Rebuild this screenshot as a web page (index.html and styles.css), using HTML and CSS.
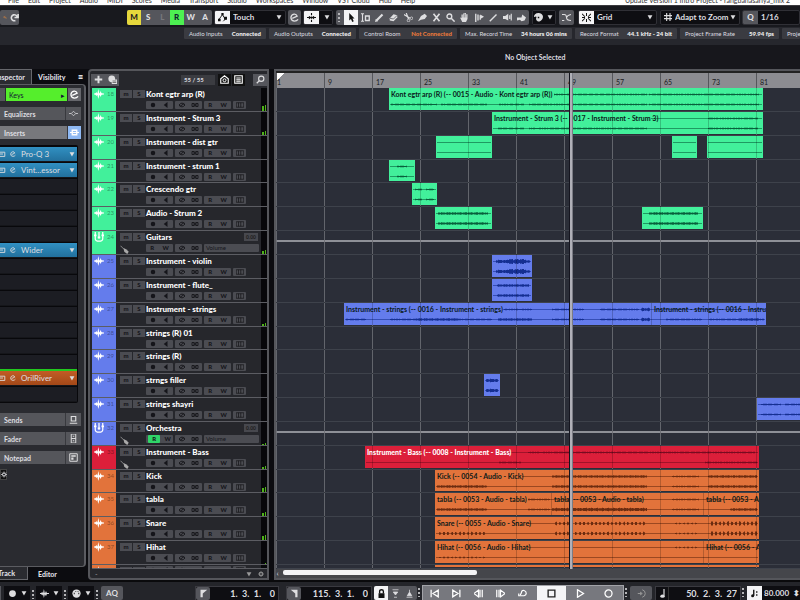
FILE: index.html
```
<!doctype html>
<html lang="en">
<head>
<meta charset="utf-8">
<title>Project</title>
<link rel="stylesheet" href="styles.css">
</head>
<body>
	<svg class="defs" aria-hidden="true">
		<symbol id="i-down" viewBox="0 0 10 10"><path d="M1 2h8L5 9z" fill="currentColor"/></symbol>
		<symbol id="i-e" viewBox="0 0 10 10"><path d="M2.500 6 8 3.500Q7 .8 4.500 1.200 1 2 1 5.500 1.500 9 5 9 7.500 8.800 9 7" fill="none" stroke="currentColor" stroke-width="1.400"/></symbol>
		<symbol id="i-wave" viewBox="0 0 12 12"><path d="M0 6h12" stroke="currentColor" stroke-width="1.300"/><path d="M1 6 3 3.500 4 6 5.200 0 6.500 6 8 2.500 9 5 11 6 9 7 8 9.500 6.500 7 5.200 12 4 7 3 8.500z" fill="currentColor"/></symbol>
		<symbol id="i-fork" viewBox="0 0 12 12"><path d="M1.500 0v8q0 3 4.500 3t4.500-3V0M6 0v8" fill="none" stroke="currentColor" stroke-width="1.500"/><path d="M0 3h3v2H0zM4.500 5.500h3v2h-3zM9 3h3v2H9z" fill="currentColor"/></symbol>
		<symbol id="i-jack" viewBox="0 0 12 12"><path d="M0 1l5 5" stroke="currentColor"/><path d="M4 4l4 2 3 3-2 3-4-3z" fill="currentColor"/></symbol>
		<symbol id="i-gear" viewBox="0 0 12 12"><path d="M6 0v12M0 6h12M2 2l8 8M10 2l-8 8" stroke="currentColor" stroke-width="1.500"/><circle cx="6" cy="6" r="3" fill="#2a2b30" stroke="currentColor" stroke-width="1.800"/></symbol>
	</svg>

	<nav class="menu">
		<a href="#">File</a><a href="#">Edit</a><a href="#">Project</a><a href="#">Audio</a><a href="#">MIDI</a><a href="#">Scores</a><a href="#">Media</a><a href="#">Transport</a><a href="#">Studio</a><a href="#">Workspaces</a><a href="#">Window</a><a href="#">VST Cloud</a><a href="#">Hub</a><a href="#">Help</a>
		<span class="title">Update Version 1 Intro Project - rangbanasariya_mix 2</span>
	</nav>

	<header class="toolbar">
		<div class="group history">
			<button aria-label="Undo"><svg viewBox="0 0 10 10"><path d="M8 8Q9 3 3 4M4.500 1 1.500 4l3 3" fill="none" stroke="#d9843c" stroke-width="1.500"/></svg></button>
			<button aria-label="Redo"><svg viewBox="0 0 10 10"><path d="M8 4.500A3.300 3.300 0 1 0 6 8.300M9 1v4H5" fill="none" stroke="currentColor" stroke-width="1.800"/></svg></button>
		</div>
		<div class="group states">
			<button class="mute">M</button><button>S</button><button class="dim">L</button><button class="read">R</button><button>W</button><button>A</button>
		</div>
		<div class="combo automation">
			<button class="white" aria-label="Automation panel"><svg viewBox="0 0 12 12"><path d="M1 9 6 2l2 4 3 1-4 4" fill="none" stroke="currentColor" stroke-width="1.200"/><path d="M0 7.500h3.500V11H0zM4.500 0h3v3h-3zM8 5h4v4H8z" fill="currentColor"/></svg></button>
			<select aria-label="Automation mode"><option>Touch</option></select>
			<svg class="caret"><use href="#i-down"/></svg>
		</div>
		<button class="btn edit" aria-label="Edit"><svg><use href="#i-e"/></svg></button>
		<div class="combo scroll">
			<button class="white" aria-label="Auto-scroll"><svg viewBox="0 0 12 12"><path d="M6 0v3M6 4.500v3M6 9v3M0 6h12" stroke="currentColor" stroke-width="1.500"/><path d="M2.500 3.500 6 6 2.500 8.500zM9.500 3.500 6 6l3.500 2.500z" fill="currentColor"/></svg></button>
			<button class="black" aria-label="Auto-scroll options"><svg><use href="#i-down"/></svg></button>
		</div>
		<div class="group tools">
			<span class="dots"></span>
			<button class="white" aria-label="Select"><svg viewBox="0 0 12 12"><path d="M3 0v10l2.300-2L7 12l2-1-1.700-3.700H10z" fill="currentColor"/></svg></button>
			<button aria-label="Range"><svg viewBox="0 0 12 12"><path d="M0 1h4M2 1v10M0 11h4" stroke="currentColor" stroke-width="1.500"/><path d="M6 4h5v6H6z" fill="none" stroke="currentColor" stroke-width="1.800"/></svg></button>
			<button aria-label="Draw"><svg viewBox="0 0 12 12"><path d="M2 10 10 2" stroke="currentColor" stroke-width="2.800"/><path d="M0 12l1-4 3 3z" fill="currentColor"/></svg></button>
			<button aria-label="Erase"><svg viewBox="0 0 12 12"><path d="M1 7 6 1.500l5 1.500v3l-5 5-5-1z" fill="currentColor"/><path d="M1 7l5 1 5-5" fill="none" stroke="#55565c"/></svg></button>
			<button aria-label="Split"><svg viewBox="0 0 12 12"><path d="M0 2l8 5M3 0l3 8" stroke="currentColor" stroke-width="1.600"/><circle cx="10" cy="7" r="1.700" fill="none" stroke="currentColor"/><circle cx="6" cy="10" r="1.700" fill="none" stroke="currentColor"/></svg></button>
			<button aria-label="Glue"><svg viewBox="0 0 12 12"><path d="M0 11 4 4l5-3 3 3-3 4-5 1z" fill="currentColor"/></svg></button>
			<button aria-label="Mute"><svg viewBox="0 0 12 12"><path d="M2 1l8 10M10 1 2 11" stroke="currentColor" stroke-width="2.200"/></svg></button>
			<button aria-label="Zoom"><svg viewBox="0 0 12 12"><circle cx="4.500" cy="4.500" r="3.200" fill="none" stroke="currentColor" stroke-width="1.800"/><path d="M7 7l4.500 4.500" stroke="currentColor" stroke-width="2"/></svg></button>
			<button aria-label="Comp"><svg viewBox="0 0 12 12"><path d="M3 12 0 6l2 .5V2h2V.5h2V0h2v1.500h2V8l-2 4z" fill="currentColor"/><path d="M4 1v5M6 1v5M8 1v5" stroke="#55565c" stroke-width=".6"/></svg></button>
			<button aria-label="Time warp"><svg viewBox="0 0 12 12"><path d="M1 1v11M4 2v8M7 3v6" stroke="currentColor" stroke-width="1.800"/><path d="M7 2l5 3-5 3z" fill="currentColor"/></svg></button>
			<button aria-label="Line"><svg viewBox="0 0 12 12"><path d="M1 11 10 2" stroke="currentColor" stroke-width="1.800"/></svg></button>
			<button aria-label="Play"><svg viewBox="0 0 12 12"><path d="M0 4h3l4-3v9L3 8H0z" fill="currentColor"/><path d="M9 3v5M11 1v9" stroke="currentColor" stroke-width="1.500"/></svg></button>
			<button aria-label="Color"><svg viewBox="0 0 12 12"><path d="M0 6h6l1-4 5 4-2 4-4 1-2-2-4 1z" fill="currentColor"/></svg></button>
		</div>
		<div class="combo palette">
			<button class="black" aria-label="Palette"><svg viewBox="0 0 12 12"><path d="M6 0C2 0 0 2.500 0 5c1 1 2-1 3 0s-1 2 0 4 3 3 5 2 4-3 4-6-3-5-6-5z" fill="currentColor"/><path d="M5 5h2v2H5z" fill="#111"/></svg></button>
			<button class="black" aria-label="Palette options"><svg><use href="#i-down"/></svg></button>
		</div>
		<button class="btn cross" aria-label="Crossfade"><svg viewBox="0 0 12 12"><path d="M0 2h3q3 0 3 4t6 4M0 10h3M6 6q1-3 6-4" fill="none" stroke="currentColor" stroke-width="1.400"/></svg></button>
		<div class="combo snap">
			<button class="white" aria-label="Snap"><svg viewBox="0 0 12 12"><path d="M6 0v4M6 8v4M0 1l4 4M0 6h4M0 11l4-4M12 1 8 5M12 6H8M12 11 8 7" stroke="currentColor" stroke-width="1.400"/></svg></button>
			<select aria-label="Snap type"><option>Grid</option></select>
			<svg class="caret"><use href="#i-down"/></svg>
		</div>
		<div class="combo adapt">
			<svg class="hash" viewBox="0 0 12 12"><path d="M4 0v12M9 0v12M0 4h12M0 8.500h12" stroke="currentColor" stroke-width="1.700"/></svg>
			<select aria-label="Grid type"><option>Adapt to Zoom</option></select>
			<svg class="caret"><use href="#i-down"/></svg>
		</div>
		<div class="combo quantize">
			<button class="q" aria-label="Apply quantize">Q</button>
			<select aria-label="Quantize preset"><option>1/16</option></select>
		</div>
	</header>

	<section class="status">
		<div class="pill"><span>Audio Inputs</span><b>Connected</b></div>
		<div class="pill"><span>Audio Outputs</span><b>Connected</b></div>
		<div class="pill"><span>Control Room</span><b class="warn">Not Connected</b></div>
		<div class="pill"><span>Max. Record Time</span><b>34 hours 06 mins</b></div>
		<div class="pill"><span>Record Format</span><b>44.1 kHz - 24 bit</b></div>
		<div class="pill"><span>Project Frame Rate</span><b>59.94 fps</b></div>
		<div class="pill"><span>Project</span></div>
	</section>
	<div class="infoline">No Object Selected</div>

	<main>
		<aside class="inspector">
			<div class="tabs top">
				<button class="on">Inspector</button><button>Visibility</button><button class="burger">≡</button>
			</div>
			<div class="panel">
				<div class="keys"><span class="nub"></span><button class="name">Keys<i>▸</i></button><button class="open" aria-label="Edit channel"><svg><use href="#i-e"/></svg></button></div>
				<button class="sect">Equalizers<svg viewBox="0 0 12 12"><path d="M0 6h3M9 6h3M6 3l3 3-3 3-3-3z" fill="none" stroke="currentColor"/></svg></button>
				<button class="sect lit">Inserts<svg viewBox="0 0 12 12"><path d="M0 6h12" stroke="currentColor" stroke-width="1.500"/><path d="M3 3h6v6H3z" fill="none" stroke="currentColor" stroke-width="1.800"/></svg></button>
				<div class="slots" id="slots"></div>
				<button class="sect">Sends<svg viewBox="0 0 12 12"><path d="M3 2h6v6H3zM1 11h10" fill="none" stroke="currentColor" stroke-width="1.500"/></svg></button>
				<button class="sect">Fader<svg viewBox="0 0 12 12"><path d="M3 0h6v12H3zM3 6h6M5 3h2M5 9h2" fill="none" stroke="currentColor" stroke-width="1.300"/></svg></button>
				<button class="sect">Notepad<svg viewBox="0 0 12 12"><path d="M1 1h10v10H1z" fill="none" stroke="currentColor" stroke-width="1.300"/><path d="M3 3h6v2H3zM3 6h3v3H3z" fill="currentColor"/></svg></button>
				<button class="setup" aria-label="Setup"><svg><use href="#i-gear"/></svg></button>
			</div>
			<div class="tabs bottom">
				<button class="on">Track</button><button>Editor</button>
			</div>
		</aside>

		<section class="tracklist">
			<div class="listhead">
				<div class="add">
					<button aria-label="Add track"><svg viewBox="0 0 12 12"><path d="M6 1v10M1 6h10" stroke="currentColor" stroke-width="2.600"/></svg></button>
					<button aria-label="Use preset"><svg viewBox="0 0 12 12"><circle cx="5" cy="5" r="4.500" fill="currentColor"/><path d="M5 6h7v6H5z" fill="currentColor"/><path d="M6 8h5M6 10h5" stroke="#555"/></svg></button>
				</div>
				<span class="count">55 / 55</span>
				<button class="sq" aria-label="Visibility agents"><svg viewBox="0 0 12 12"><path d="M1 11V5l5-4 5 4v6z" fill="none" stroke="currentColor" stroke-width="1.500"/><circle cx="6" cy="7" r="2" fill="none" stroke="currentColor" stroke-width="1.300"/></svg></button>
				<button class="sq" aria-label="Track types"><svg viewBox="0 0 12 12"><path d="M1 1h10v10H1zM3 4h6M3 6.500h6M3 9h6" fill="none" stroke="currentColor" stroke-width="1.500"/></svg></button>
				<button class="find" aria-label="Find track"><svg viewBox="0 0 12 12"><circle cx="7" cy="5" r="3.500" fill="none" stroke="currentColor" stroke-width="1.500"/><path d="M4.500 7.500 1 11" stroke="currentColor" stroke-width="1.800"/></svg></button>
			</div>
			<div class="rows" id="tracks"></div>
			<div class="listfoot"><span>-</span><svg><use href="#i-down"/></svg><svg><use href="#i-gear"/></svg></div>
		</section>

		<section class="arrange">
			<div class="ruler" id="ruler"></div>
			<div class="rows lanes" id="lanes"></div>
			<div class="hscroll"><button aria-label="Scroll left">‹</button><span class="thumb"></span></div>
			<div class="playhead"></div>
		</section>
	</main>

	<footer class="transport">
		<div class="left">
			<span class="edge"></span>
			<button class="drop" aria-label="Record mode"><svg viewBox="0 0 12 12"><circle cx="6" cy="6" r="4.500" fill="currentColor"/></svg><svg class="tiny"><use href="#i-down"/></svg></button>
			<span class="dots"></span>
			<button class="drop" aria-label="Audio record mode"><svg><use href="#i-wave"/></svg><svg class="tiny"><use href="#i-down"/></svg></button>
			<span class="dots"></span>
			<button class="drop" aria-label="MIDI record mode"><svg viewBox="0 0 12 12"><circle cx="6" cy="6" r="5.500" fill="currentColor"/><path d="M3 7V5M5 4V3M8 4V3M9 7V5" stroke="#111" stroke-width="1.200"/></svg><svg class="tiny"><use href="#i-down"/></svg></button>
			<span class="dots"></span>
			<button class="btn aq">AQ</button>
		</div>
		<div class="loc">
			<button class="btn" aria-label="Go to left locator"><svg viewBox="0 0 12 12"><path d="M2 1h9L5 6v5H2z" fill="currentColor"/></svg></button>
			<input aria-label="Left locator" value="1.  3.  1.    0">
		</div>
		<div class="loc second">
			<button class="btn" aria-label="Go to right locator"><svg viewBox="0 0 12 12"><path d="M1 1h9v10H7V6z" fill="currentColor"/></svg></button>
			<input aria-label="Right locator" value="115.  3.  1.    0">
		</div>
		<div class="group punch">
			<button class="white" aria-label="Lock punch points"><svg viewBox="0 0 12 12"><path d="M2 5.500h8V12H2z" fill="currentColor"/><path d="M3.500 6V3q0-2 2.500-2t2.500 2v3" fill="none" stroke="currentColor" stroke-width="1.800"/></svg></button>
			<button aria-label="Punch in"><svg viewBox="0 0 12 12"><path d="M2 1h8M3 4h6L6 8zM4 11h4" fill="currentColor" stroke="currentColor"/></svg></button>
			<button aria-label="Punch out"><svg viewBox="0 0 12 12"><path d="M2 11h8M3 9h6L6 4zM6 1v3" fill="currentColor" stroke="currentColor"/></svg></button>
		</div>
		<span class="dots"></span>
		<div class="play">
			<button aria-label="Previous"><svg viewBox="0 0 12 12"><path d="M1.500 1v10M11 1.500v9L4 6z" fill="none" stroke="currentColor" stroke-width="1.700"/></svg></button>
			<button aria-label="Next"><svg viewBox="0 0 12 12"><path d="M10.500 1v10M1 1.500v9L8 6z" fill="none" stroke="currentColor" stroke-width="1.700"/></svg></button>
			<button aria-label="Rewind"><svg viewBox="0 0 12 12"><path d="M6 1.500v9L0 6zM8 1v10M11 1v10" fill="none" stroke="currentColor" stroke-width="1.600"/></svg></button>
			<button aria-label="Forward"><svg viewBox="0 0 12 12"><path d="M6 1.500v9L12 6zM4 1v10M1 1v10" fill="none" stroke="currentColor" stroke-width="1.600"/></svg></button>
			<button aria-label="Cycle"><svg viewBox="0 0 12 12"><path d="M1 9h7q3-1 3-3.500T8 2 4.500 5L3 8M1 6v3h4" fill="none" stroke="currentColor" stroke-width="1.600"/></svg></button>
			<button class="stop" aria-label="Stop"><svg viewBox="0 0 12 12"><path d="M1.500 1.500h9v9h-9z" fill="none" stroke="currentColor" stroke-width="1.800"/></svg></button>
			<button class="wide" aria-label="Start"><svg viewBox="0 0 12 12"><path d="M2 1v10l8-5z" fill="none" stroke="currentColor" stroke-width="1.700"/></svg></button>
			<button class="wide" aria-label="Record"><svg viewBox="0 0 12 12"><circle cx="6" cy="6" r="4.700" fill="none" stroke="currentColor" stroke-width="1.700"/></svg></button>
		</div>
		<span class="dots"></span>
		<button class="btn pre" aria-label="Pre-roll"><svg viewBox="0 0 12 12"><path d="M1 6h5M4 4l3 2-3 2M7 1q4 1 4 5t-4 5" fill="none" stroke="currentColor" stroke-width="1.300"/></svg></button>
		<div class="time">
			<button class="black" aria-label="Time format"><svg viewBox="0 0 12 12"><path d="M8 0v9" stroke="currentColor" stroke-width="1.600"/><ellipse cx="6" cy="9.500" rx="3" ry="2.300" fill="currentColor"/></svg></button>
			<input aria-label="Position" value="50.  2.  3.  27">
		</div>
		<span class="dots"></span>
		<button class="white tempo" aria-label="Tempo track"><svg viewBox="0 0 12 12"><path d="M5 1v8M9 3v2M9 7v2" stroke="currentColor" stroke-width="1.800"/><circle cx="3.500" cy="9" r="2" fill="currentColor"/></svg></button>
		<input class="bpm" aria-label="Tempo" value="80.000  ⬍">
	</footer>
	<script src="script.js"></script>
</body>
</html>
```

FILE: styles.css
```
*{box-sizing:border-box;}
body{margin:0; height:100vh; display:flex; flex-direction:column; overflow:hidden; background:#0c0c10; color:#dedee0; font:8px/10px Lato,"Open Sans",sans-serif;}
button,input,select{font:inherit; color:inherit; border:0; padding:0; margin:0; background:none; border-radius:0; min-width:0;}
button{display:flex; align-items:center; justify-content:center;}
svg{width:9px; height:9px; flex:none; display:block;}
.defs{position:absolute; width:0; height:0;}
.white{background:#f4f4f6; color:#111;}
.black{background:#0e0e12;}
.btn{background:#55565c; border-radius:2px;}
.dots{width:2px; height:9px; flex:none; background:repeating-linear-gradient(#b5b5b8 0 2px,transparent 2px 4px);}

/* menu */
.menu{flex:none; height:5px; overflow:hidden; display:flex; align-items:flex-end; gap:9px; padding:0 10px 0 8px; background:#fff; font-size:7px; line-height:9px;}
.menu a{color:#333; text-decoration:none; white-space:nowrap;}
.menu .title{margin-left:auto; white-space:nowrap; color:#333;}

/* toolbar */
.toolbar{flex:none; height:22px; display:flex; align-items:center; padding-top:1px; background:#18191e; font-weight:700; border-top:1px solid #3a3a3e;}
.toolbar > *{height:15px; flex:none;}
.group{display:flex; background:#55565c; border-radius:2px; overflow:hidden;}
.group button{flex:1;}
.history{width:19px; margin-right:108px;}
.history button:first-child svg{width:4px;}
.states{width:85px; font-weight:900;}
.states .mute{background:#e6d83c; color:#222;}
.states .dim{color:#77787c;}
.states .read{background:#4df052; color:#123;}
.combo{display:flex; align-items:center; background:#0e0e12; border:1px solid #303036; border-radius:2px; overflow:hidden;}
.combo button{width:15px; height:15px; flex:none;}
.combo select{appearance:none; flex:1; height:13px; padding-left:3px; outline:0;}
.caret{width:6px; height:6px; margin-right:3px;}
.automation{width:72px; margin-left:2px;}
.edit{width:13px; margin-left:2px;}
.scroll{width:30px; margin-left:2px;}
.scroll .black svg,.palette button + button svg{width:6px; height:6px;}
.tools{width:193px; margin-left:3px; padding-left:2px; align-items:center;}
.tools button{height:15px;}
.tools .dots{margin-right:4px;}
.palette{width:24px; margin-left:3px;}
.palette .black{width:11px;}
.cross{width:15px; margin-left:3px;}
.snap{width:79px; margin-left:4px;}
.adapt{width:80px; margin-left:3px;}
.hash{width:8px; height:8px; margin-left:3px;}
.toolbar .quantize{margin-left:2px; flex:1;}
.quantize .q{background:#55565c; font-weight:900;}

/* status */
.status{flex:none; height:18px; display:grid; grid-template-columns:82px 87px 98px 112px 102px 99px 1fr; gap:3px; padding:1px 0 6px 184px; background:#26272d; overflow:hidden;}
.pill{display:flex; justify-content:space-between; align-items:center; padding:0 5px; background:#3a3b41; border-radius:1px; font-size:6px; white-space:nowrap; overflow:hidden;}
.pill b{font-weight:900; color:#f0f0f0;}
.pill .warn{color:#e8793a;}
.infoline{flex:none; height:24px; display:flex; align-items:center; padding-left:505px; background:#17171c; font-size:7px; font-weight:700;}

main{flex:1; min-height:0; display:flex;}

/* inspector */
.inspector{width:86px; flex:none; margin-right:2px; display:flex; flex-direction:column;}
.tabs{flex:none; display:flex; height:15px; font-weight:900; font-size:7px;}
.tabs button{padding:0 6px;}
.tabs .on{width:32px; justify-content:flex-end; overflow:hidden; background:#2a2b30; border:1px solid #66676c;}
.top .on{border-width:1px 1px 0 0;}
.top .burger{margin-left:auto; padding-right:3px; font-size:9px;}
.bottom{height:13px;}
.bottom .on{width:28px; padding-right:12px; border-width:0 1px 1px 0;}
.bottom button + button{padding-left:10px;}
.panel{flex:1; min-height:0; display:flex; flex-direction:column; gap:6px; padding:3px 3px 0 0; background:#2a2b30; border:2px solid #5b5c61; border-left:0; border-radius:0 4px 4px 0; border-bottom-width:1px;}
.top + .panel{border-top-width:1px;}
.keys{display:flex; height:13px; flex:none; gap:1px; font-size:7px;}
.nub{width:5px; background:#55565c;}
.keys .name{flex:1; background:#55ee2c; color:#113; padding:0 2px 0 3px; justify-content:space-between;}
.keys i{font-style:normal;}
.open{width:13px; background:#66676c; color:#fff;}
.sect{height:13px; flex:none; justify-content:space-between; padding:0 3px 0 4px; background:#55565b; font-size:7px; font-weight:700;}
.sect svg{box-sizing:content-box; padding:2px 0 2px 3px; border-left:1px solid #38393e; width:9px;}
.sect.lit{background:#77787c; padding-right:0;}
.lit svg{background:#8fb9f3; color:#fff; padding:2px;}
.slots{display:flex; flex-direction:column; gap:1px; margin:0 3px 4px 0; padding:2px 1px 1px 0; background:#08080b; border-radius:0 2px 2px 0;}
.slot{height:15px; display:flex; align-items:center; gap:4px; background:#1c1d23; border-bottom:1px solid #15161a;}
.slot.plug{background:linear-gradient(#3190c2,#22709d);}
.slot.post{background:linear-gradient(#c25c25,#a34818);  box-shadow:0 -2px #22c81e;}
.slot svg{width:6px; height:6px;}
.slot svg:nth-of-type(2){margin-right:1px;}
.slot svg:last-child{margin:0 2px 0 auto;}
.setup{width:7px; height:11px; margin-top:-1px; background:#111; border:1px solid #444; flex:none;}
.setup svg{width:6px;}

/* track list */
.tracklist{width:181px; flex:none; display:flex; flex-direction:column; background:#26272c; border:2px solid #55565b; border-radius:4px 0 0 4px;}
.listhead{height:17px; flex:none; display:flex; align-items:center; padding:1px 0 1px 1px;}
.add{display:flex; background:#55565c; width:28px; height:12px; margin-right:62px;}
.add button{flex:1;}
.count{width:34px; padding-left:3px; background:#3b3c41; font-size:6px; font-weight:700; margin-right:3px;}
.sq{width:13px; height:12px; background:#111; color:#fff; margin-right:1px;}
.find{width:14px; height:12px; background:#55565c; margin-left:7px;}
.rows{flex:1; min-height:0; display:grid; grid-template-rows:repeat(20,minmax(0,1fr)) 4px; overflow:hidden;}
.track{display:grid; grid-template-columns:24px 30px 1fr 6px; margin-left:2px; border-bottom:1px solid #5c5d63; overflow:hidden; min-height:0;}
.tag{display:flex; gap:3px; padding:1px 2px; color:#fff; font-size:6px; line-height:10px;}
.tag svg{width:10px; height:10px;}
.tag span{color:#0006;}
.green{background:#42f09b;}
.blue{background:#647cec;}
.red{background:#dc1f3a;}
.orange{background:#e2733b;}
.ms{display:grid; grid-template-columns:12px 12px; grid-template-rows:8px 1fr; gap:1px; padding:2px 0 0 4px;}
.ms button,.ctl span{background:#4b4c52; color:#15151a; font-size:6px; line-height:8px; font-weight:900;}
.ms svg{color:#aaa; margin-top:3px; width:10px;}
.name{min-width:0;}
.track h3{margin:0; display:flex; justify-content:space-between; font-size:8px; line-height:12px; font-weight:900; color:#fff; white-space:nowrap;}
.track h3 small{background:#47484e; color:#222; font-size:5px; line-height:8px; height:8px; margin:2px 3px 0 0; padding:0 2px;}
.ctl{display:flex; gap:2px; height:8px; margin-top:1px;}
.ctl span{width:27px; display:flex; justify-content:space-around; align-items:center; border-radius:1px;}
.ctl span.keysbox{width:13px;}
.ctl span.vol{flex:1; margin-right:2px; padding-left:2px; justify-content:flex-start; font-weight:400;}
.ctl svg{width:8px; height:6px;}
.ctl .armed{background:#2fd568; padding:0 4px; border-radius:1px;}
.meter{background:#07070a; display:flex; align-items:flex-end; gap:1px; padding:0 1px;}
.meter i{width:2px; background:#4fb31a;}
.listfoot{height:9px; flex:none; display:flex; align-items:center; gap:6px; padding:0 3px 0 5px; color:#999;}
.listfoot span{margin-right:auto; font-size:7px;}
.listfoot svg{width:6px; height:6px;}

/* arrangement, 6px for each bar */
.arrange{flex:1; min-width:0; display:flex; flex-direction:column; position:relative; margin-left:5px; border:solid #55565b; border-width:2px 0 2px 2px; background:#2b2e38; overflow:hidden;}
.ruler{height:17px; flex:none; display:flex; border-top:2px solid #222; background:#8c8c91; color:#1a1a1e; overflow:hidden;}
.ruler span{width:48px; flex:none; border-left:1px solid #55565b; padding:5px 0 0 3px; font-size:7px; line-height:9px;}
.ruler span:first-child{padding-left:0; background:linear-gradient(135deg,#fff 5px,transparent 5px);}
.lanes{position:relative;}
.lanes::after{content:""; position:absolute; inset:0; background:repeating-linear-gradient(90deg,#0003 0 1px,transparent 1px 48px); pointer-events:none;}
.lane{position:relative; border-bottom:1px solid #3e424b; min-height:0; background:repeating-linear-gradient(90deg,#7b7e87 0 1px,transparent 1px 48px);}
.lane.folder{background:linear-gradient(transparent 9px,#8e9097 9px 11px,transparent 11px),repeating-linear-gradient(90deg,#7b7e87 0 1px,transparent 1px 48px);}
.clip{position:absolute; top:0; bottom:1px; overflow:hidden; color:#0a1a1a;}
.clip.bare{border-left:1px solid #0003;}
.clip.red{color:#fff;}
.clip svg{position:absolute; left:0; top:0; width:100%; height:22px;}
.clip.green svg{color:#08603c;}
.clip.blue svg{color:#152f92;}
.clip.red svg{color:#780b20;}
.clip.orange svg{color:#6c2c10;}
.clip span{position:relative; display:block; padding:0 2px; font-size:7px; line-height:12px; font-weight:700; white-space:nowrap;}
.clip.red span{font-weight:900;}
.hscroll{height:9px; flex:none; display:flex; align-items:center; gap:4px; padding-bottom:2px; background:#45464b; z-index:2;}
.hscroll button{width:3px; height:7px;}
.thumb{width:37%; height:5px; background:#f4f4f6; border-radius:2px;}
.playhead{position:absolute; left:294px; top:2px; bottom:9px; width:2px; background:#b0b0b8; box-shadow:-1px 0 #15151f,1px 0 #7a7b84;}

/* transport */
.transport{flex:none; height:20px; display:flex; align-items:flex-end; background:#24252a; border-top:2px solid #0a0a0c; font-size:9px; font-weight:700;}
.transport > *{height:14px; flex:none;}
.transport > .dots,.left .dots{height:9px; align-self:center; margin:2px 2px 0 1px;}
.left{display:flex; width:195px;}
.edge{width:1px; background:#55565c; margin-right:3px;}
.drop{width:26px; gap:4px; background:#0e0e12; margin-right:1px;}
.tiny{width:6px; height:6px;}
.aq{width:22px; margin-left:1px; font-size:8px;}
.loc,.time{display:flex; background:#0e0e12; border:1px solid #3a3a40; border-bottom:0;}
.loc{width:84px;}
.second{width:86px; margin-left:7px;}
.loc .btn{width:14px;}
.transport input{flex:1; text-align:right; padding-right:3px; width:0; white-space:pre;}
.punch{width:43px; margin-left:2px;}
.play{display:flex; flex:none; width:202px; height:15px; background:#77787e; color:#fff; border:1px solid #a2a3a8; border-bottom:0;}
.play button{width:22px; flex:none;}
.play .stop{background:#f4f4f6; color:#222; width:29px; margin-left:4px;}
.play .wide{width:28px;}
.pre{width:22px; margin-left:1px; color:#999;}
.time{width:86px; margin-left:3px;}
.time button{width:13px; border-right:1px solid #333;}
.tempo{width:15px; margin-left:1px;}
.transport .bpm{font-size:8px; background:#0e0e12; padding-right:0;}
```

FILE: script.js
```
// [number, name, colour, type, meter height, clips]
// clip: [start, length, labels [[x, text]], wave segments [[from, to, amp]], upper segments when they differ]
var tracks = [
	["18","Kont egtr arp (R)","green","audio",6,[[113,374,[[0,"Kont egtr arp (R) (-- 0015 - Audio - Kont egtr arp (R))"]],[[2,48,1],[52,98,1],[110,135,1],[140,258,1],[260,370,1]],[[165,258,1],[260,370,1]]]]],
	["19","Instrument - Strum 3","green","audio",4,[[216,271,[[0,"Instrument - Strum 3 (-- 0017 - Instrument - Strum 3)"]],[[6,32,1],[37,155,1],[216,266,1]],[[216,266,1]]]]],
	["20","Instrument - dist gtr","green","audio",0,[[160,56,[],[]],[396,25,[],[]],[431,56,[],[]]]],
	["21","Instrument - strum 1","green","audio",0,[[113,26,[],[[8,18,1]]]]],
	["22","Crescendo gtr","green","audio",0,[[136,25,[],[[3,10,1],[14,22,1]]]]],
	["23","Audio - Strum 2","green","audio",0,[[159,57,[],[[3,53,2]]],[366,61,[],[[7,56,2]]]]],
	["24","Guitars","green","folder",4,[]],
	["25","Instrument - violin","blue","audio",0,[[216,40,[],[[4,16,3],[15,34,5],[30,38,2]]]]],
	["26","Instrument - flute_","blue","audio",0,[[216,40,[],[[5,37,2]]]]],
	["27","Instrument - strings","blue","audio",3,[[68,422,[[0,"Instrument - strings (-- 0016 - Instrument - strings)"],[307,"Instrument - strings (-- 0016 - Instrument - strings)"]],[[2,22,1],[46,148,1],[72,115,2],[154,188,2],[208,240,1],[256,295,1],[297,306,3],[322,358,1],[365,420,1],[395,415,2]],[[160,188,1],[208,240,1],[256,295,1],[297,306,3]]]]],
	["28","strings (R) 01","blue","audio",0,[]],
	["29","strings (R)","blue","audio",0,[]],
	["30","strngs filler","blue","audio",0,[[208,16,[],[[2,14,3]]]]],
	["31","strings shayri","blue","audio",0,[[481,90,[],[[4,24,1],[28,44,1]]]]],
	["32","Orchestra","blue","folder",2,[]],
	["33","Instrument - Bass","red","audio",3,[[89,394,[[0,"Instrument - Bass (-- 0008 - Instrument - Bass)"]],[[134,156,1],[340,392,1]],[[163,390,1]]]]],
	["34","Kick","orange","audio",5,[[159,324,[[0,"Kick (-- 0054 - Audio - Kick)"]],[[2,52,2],[117,212,2],[237,264,1],[273,322,2]],[[117,212,2],[237,264,1],[273,322,2]]]]],
	["35","tabla","orange","audio",4,[[159,324,[[0,"tabla (-- 0053 - Audio - tabla)"],[116,"tabla (-- 0053 - Audio - tabla)"],[268,"tabla (-- 0053 - Audio - tabla)"]],[[2,52,2],[93,115,1],[117,212,3],[237,264,1],[295,322,2]],[[93,115,1],[237,264,1]]]]],
	["36","Snare","orange","audio",5,[[159,324,[[0,"Snare (-- 0055 - Audio - Snare)"]],[[4,52,-3],[119,212,-3],[238,264,-1],[275,322,-4]],[[119,212,-3],[238,264,-1],[275,322,-4]]]]],
	["37","Hihat","orange","audio",1,[[159,324,[[0,"Hihat (-- 0056 - Audio - Hihat)"],[268,"Hihat (-- 0056 - Audio - Hihat)"]],[[4,52,-1]],[[238,264,-1]]]]],
	["","","orange","audio",0,[[159,324,[],[]]]]
];

var slots = ["Pro-Q 3","Vint...essor","","","","","Wider","","","","","","","","OrilRiver",""];

function use(id){
	return '<svg><use href="#' + id + '"/></svg>';
}

// one channel of a waveform around the line y
function wave(segs,y,from,width){
	var d = "M" + from + " " + y + "H" + (width-1);
	var fill = "";
	for (var i = 0; i < segs.length; i++) {
		var a = segs[i][2];
		for (var x = segs[i][0]; x < segs[i][1]; x++) {
			if (a < 0 && x % 4 > 1) continue;
			var h = Math.abs(a)*(0.7 + 0.3*Math.sin(x*1.7)*Math.cos(x*0.6));
			fill += "M" + x + " " + (y-h/2-0.3) + "h1v" + (h+0.6) + "h-1z";
		}
	}
	return '<path d="' + d + '" stroke="currentColor" stroke-width=".6"/><path d="' + fill + '" fill="currentColor"/>';
}

function clip(c,color){
	var html = '<div class="clip ' + color + '" style="left:' + c[0] + 'px;width:' + c[1] + 'px"><svg>';
	var last = c[2].length ? c[2][0][1].length*3 : 1;
	html += wave(c[4] || (c[2].length ? [] : c[3]),6.5,last,c[1]) + wave(c[3],16.5,1,c[1]) + "</svg>";
	for (var i = 0; i < c[2].length; i++) {
		if (i) {
			html += '</div><div class="clip bare ' + color + '" style="left:' + (c[0]+c[2][i][0]) + 'px;width:' + (c[1]-c[2][i][0]) + 'px;background:none">';
		}
		html += "<span>" + c[2][i][1] + "</span>";
	}
	return html + "</div>";
}

var list = "", lanes = "";
for (var i = 0; i < tracks.length; i++) {
	var t = tracks[i];
	var folder = t[3] === "folder";
	var armed = t[1] === "Orchestra";
	var eye = '<svg viewBox="0 0 10 8"><path d="M2 6 8 2M1 4q4-5 8 0-4 5-8 0" fill="none" stroke="currentColor" stroke-width="1.2"/></svg>';
	var link = '<svg viewBox="0 0 10 8"><path d="M1 2h3v4H1zM6 2h3v4H6zM3 4h4" fill="none" stroke="currentColor" stroke-width="1.2"/></svg>';
	var ctl = folder
		? '<span><b' + (armed ? ' class="armed"' : '') + '>R</b><b>W</b></span><span>' + eye + link + '</span><span class="vol">Volume</span>'
		: '<span><svg viewBox="0 0 8 8"><circle cx="4" cy="4" r="3" fill="currentColor"/></svg><svg viewBox="0 0 8 8"><path d="M1 4 6 0v8z" fill="currentColor"/></svg></span><span>' + eye + link + '</span><span><b>R</b><b>W</b></span><span class="keysbox"><svg viewBox="0 0 10 8"><path d="M0 1h10v6H0zM3 1v6M6 1v6" fill="none" stroke="currentColor"/></svg></span>';
	list += '<div class="track"><div class="tag ' + t[2] + '">' + use(folder ? "i-fork" : "i-wave") + '<span>' + t[0] + '</span></div>'
		+ '<div class="ms"><button>m</button><button>S</button>' + (folder || t[2] === "red" ? use("i-jack") : "") + '</div>'
		+ '<div class="name"><h3>' + t[1] + (folder ? "<small>0.00</small>" : "") + '</h3><div class="ctl">' + ctl + '</div></div>'
		+ '<div class="meter"><i style="height:' + Math.max(0,t[4]-1) + 'px"></i><i style="height:' + t[4] + 'px"></i></div></div>';
	lanes += '<div class="lane' + (folder ? " folder" : "") + '">';
	for (var j = 0; j < t[5].length; j++) {
		lanes += clip(t[5][j],t[2]);
	}
	lanes += "</div>";
}
document.getElementById("tracks").innerHTML = list;
document.getElementById("lanes").innerHTML = lanes;

var marks = "";
for (var bar = 1; bar < 400; bar += 8) {
	marks += "<span>" + bar + "</span>";
}
document.getElementById("ruler").innerHTML = marks;

var rack = "";
for (var k = 0; k < slots.length; k++) {
	var s = slots[k];
	rack += s ? '<div class="slot plug' + (k > 13 ? " post" : "") + '"><svg viewBox="0 0 10 10"><path d="M0 2h8v7H0M0 5h5" fill="none" stroke="currentColor" stroke-width="1.500"/></svg>' + use("i-e") + s + use("i-down") + '</div>' : '<div class="slot"></div>';
}
document.getElementById("slots").innerHTML = rack;
```
